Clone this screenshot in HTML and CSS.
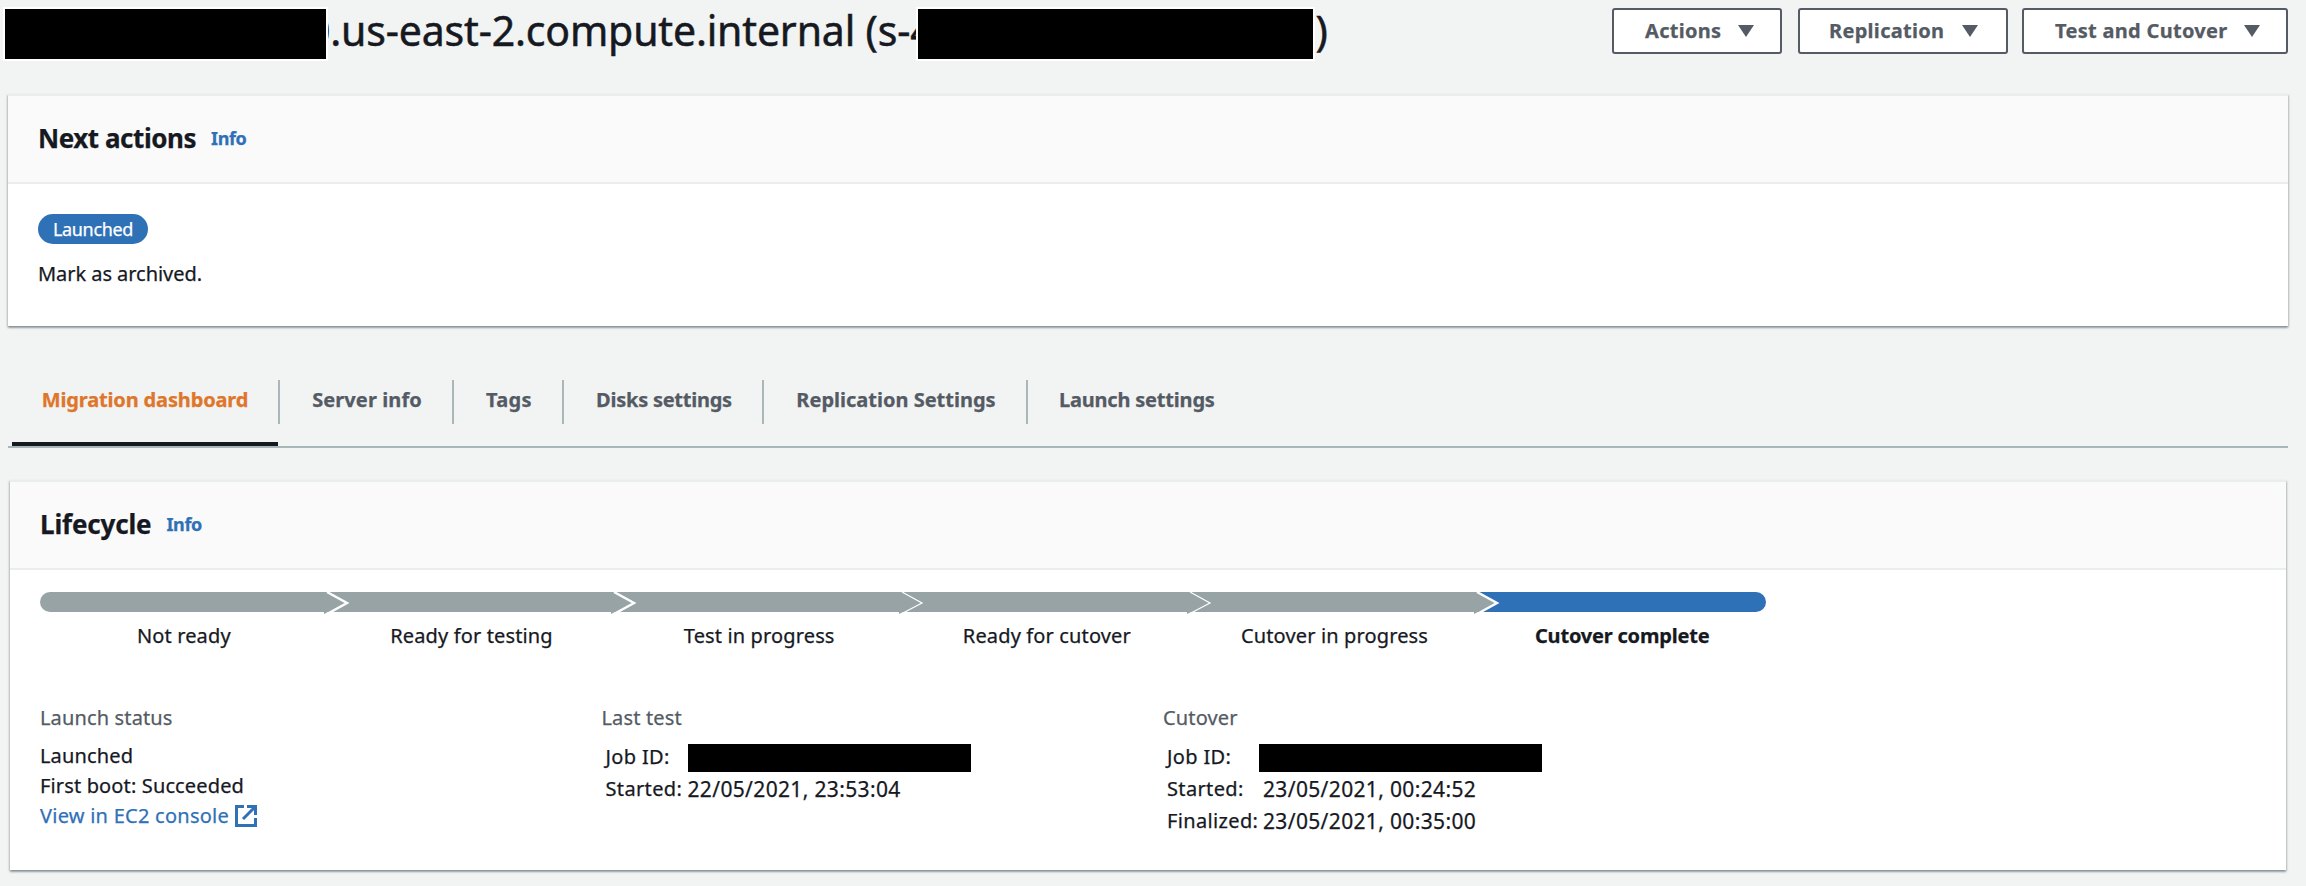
FILE: index.html
```
<!DOCTYPE html>
<html lang="en">
<head>
<meta charset="utf-8">
<title>Source server details</title>
<link rel="stylesheet" href="styles.css">
</head>
<body>
<header class="page-header">
  <h1 class="title"><span class="redacted redacted-host"></span><span class="host">0.us-east-2.compute.internal (s-4</span><span class="redacted redacted-id"></span><span>)</span></h1>
  <div class="buttons">
    <button class="btn btn-actions">Actions<svg class="caret" viewBox="0 0 16 12"><path d="M0 0h16L8 12z"/></svg></button>
    <button class="btn btn-replication">Replication<svg class="caret" viewBox="0 0 16 12"><path d="M0 0h16L8 12z"/></svg></button>
    <button class="btn btn-cutover">Test and Cutover<svg class="caret" viewBox="0 0 16 12"><path d="M0 0h16L8 12z"/></svg></button>
  </div>
</header>

<section class="panel next-actions">
  <div class="panel-header"><h2>Next actions</h2><a class="info">Info</a></div>
  <div class="panel-body">
    <span class="badge">Launched</span>
    <p class="next-text">Mark as archived.</p>
  </div>
</section>

<nav class="tabs">
  <a class="tab active">Migration dashboard</a>
  <a class="tab tab-server">Server info</a>
  <a class="tab tab-tags">Tags</a>
  <a class="tab tab-disks">Disks settings</a>
  <a class="tab tab-replication">Replication Settings</a>
  <a class="tab tab-launch">Launch settings</a>
</nav>

<section class="panel lifecycle">
  <div class="panel-header"><h2>Lifecycle</h2><a class="info">Info</a></div>
  <div class="panel-body">
    <ol class="steps">
      <li class="step"><div class="bar"><svg class="chevron" viewBox="0 0 26 22"><path class="fill" d="M0 0H4L23 11L0 22z"/><path class="line thick" d="M3 0L23 11L3 22"/></svg></div>Not ready</li>
      <li class="step"><div class="bar"><svg class="chevron" viewBox="0 0 26 22"><path class="fill" d="M0 0H4L23 11L0 22z"/><path class="line thick" d="M3 0L23 11L3 22"/></svg></div>Ready for testing</li>
      <li class="step"><div class="bar"><svg class="chevron" viewBox="0 0 26 22"><path class="fill" d="M0 0H4L23 11L0 22z"/><path class="line" d="M3 0L23 11L2 22"/></svg></div>Test in progress</li>
      <li class="step"><div class="bar"><svg class="chevron" viewBox="0 0 26 22"><path class="fill" d="M0 0H4L23 11L0 22z"/><path class="line" d="M3 0L23 11L2 22"/></svg></div>Ready for cutover</li>
      <li class="step"><div class="bar"><svg class="chevron" viewBox="0 0 26 22"><path class="fill" d="M0 0H4L23 11L0 22z"/><path class="line thick" d="M3 0L23 11L3 22"/></svg></div>Cutover in progress</li>
      <li class="step current"><div class="bar"></div>Cutover complete</li>
    </ol>
    <div class="columns">
      <div class="column">
        <div class="label">Launch status</div>
        <div>Launched</div>
        <div>First boot: Succeeded</div>
        <a class="link">View in EC2 console<svg class="external" viewBox="0 0 22 22"><path d="M9 1.500H1.500V20.500H20.500V13M12 1.500H20.500V10M20 2L8 14"/></svg></a>
      </div>
      <div class="column">
        <div class="label">Last test</div>
        <dl class="details">
          <dt>Job ID:</dt><dd class="job"></dd>
          <dt>Started:</dt><dd class="date">22/05/2021, 23:53:04</dd>
        </dl>
      </div>
      <div class="column">
        <div class="label">Cutover</div>
        <dl class="details details-cutover">
          <dt>Job ID:</dt><dd class="job"></dd>
          <dt>Started:</dt><dd class="date">23/05/2021, 00:24:52</dd>
          <dt>Finalized:</dt><dd class="date">23/05/2021, 00:35:00</dd>
        </dl>
      </div>
    </div>
  </div>
</section>
</body>
</html>
```
FILE: styles.css
```
* { box-sizing: border-box; }
body { margin: 0; width: 2306px; height: 886px; overflow: hidden; background: #f2f3f3; color: #16191f; font: 20px/30px "Noto Sans", sans-serif; -webkit-text-stroke: .25px; }
h1, h2, p, ol, dl, dd { margin: 0; padding: 0; }

.page-header { display: flex; justify-content: space-between; height: 94px; padding: 7px 18px 0 3px; }
.title { display: flex; font-size: 41px; line-height: 47px; font-weight: 400; letter-spacing: -.17px; white-space: nowrap; -webkit-text-stroke: .5px; }
.redacted { position: relative; z-index: 1; height: 54px; background: #000; border: 2px solid #fff; }
.redacted-host { width: 325px; }
.redacted-id { width: 399px; margin-left: -17px; }
.host { margin-left: -21px; }
.buttons { display: flex; padding-top: 1px; }
.btn { display: flex; align-items: center; justify-content: space-between; height: 46px; padding: 0 26px 0 31px; border: 2px solid #545b64; border-radius: 3px; background: #fff; color: #545b64; font: 700 20px/30px "Noto Sans", sans-serif; letter-spacing: .3px; white-space: nowrap; }
.btn-actions { width: 170px; margin-right: 16px; }
.btn-replication { width: 210px; margin-right: 14px; padding: 0 28px 0 29px; }
.btn-cutover { width: 266px; padding-left: 31px; }
.caret { width: 16px; height: 12px; fill: #545b64; }

.panel { background: #fff; border-top: 2px solid #eaeded; box-shadow: 0 2px 2px 0 rgba(0,28,36,.3), 1px 1px 2px 0 rgba(0,28,36,.15), -1px 1px 2px 0 rgba(0,28,36,.15); }
.panel-header { display: flex; align-items: center; gap: 15px; height: 88px; padding: 0 30px 2px; background: #fafafa; border-bottom: 2px solid #eaeded; }
h2 { font-size: 26px; line-height: 33px; font-weight: 700; letter-spacing: -.45px; }
.lifecycle h2 { letter-spacing: -.15px; }
.info { color: #2f71b7; font-size: 18px; font-weight: 700; letter-spacing: -.4px; }
.next-actions { margin: 0 18px 0 8px; height: 232px; }
.next-actions .panel-body { padding: 30px; }
.badge { display: flex; align-items: center; justify-content: center; width: 110px; height: 30px; border-radius: 15px; background: #2f71b7; color: #fff; font-size: 18px; letter-spacing: -.35px; }
.next-text { margin-top: 15px; letter-spacing: -.05px; }

.tabs { display: flex; height: 68px; margin: 54px 18px 32px 8px; border-bottom: 2px solid #aab7b8; }
.tab { height: 44px; padding: 5px 0 0 2px; border-right: 2px solid #aab7b8; color: #545b64; font-weight: 700; text-align: center; white-space: nowrap; }
.active { position: relative; width: 268px; margin-left: 4px; padding-left: 0; color: #de762b; letter-spacing: -.15px; }
.active::after { content: ""; position: absolute; left: 0; right: 0; top: 62px; height: 4px; background: #16191f; }
.tab-server { width: 174px; letter-spacing: .1px; }
.tab-tags { width: 110px; letter-spacing: .3px; }
.tab-disks { width: 200px; letter-spacing: -.25px; }
.tab-replication { width: 264px; }
.tab-launch { border: 0; padding-left: 31px; letter-spacing: -.2px; }

.lifecycle { margin: 0 20px 0 10px; height: 390px; }
.lifecycle .panel-body { padding: 22px 30px 0; letter-spacing: .14px; }
.steps { display: flex; width: 1726px; list-style: none; }
.step { flex: 1; text-align: center; }
.bar { display: flex; justify-content: flex-end; height: 20px; margin-bottom: 9px; background: #97a3a4; }
.step:first-child .bar { border-radius: 10px 0 0 10px; }
.current { font-weight: 700; letter-spacing: -.2px; }
.current .bar { background: #2f71b7; border-radius: 0 10px 10px 0; }
.chevron { position: relative; z-index: 1; flex: none; width: 26px; height: 22px; margin-right: -22px; }
.fill { fill: #97a3a4; }
.line { fill: none; stroke: #fff; stroke-width: 1.2; }
.thick { stroke-width: 2.4; }
.columns { display: flex; margin-top: 52px; }
.column { width: 561.500px; }
.label { margin-bottom: 8px; color: #545b64; }
.link { display: flex; align-items: center; gap: 6px; color: #2f71b7; letter-spacing: .25px; }
.external { width: 22px; height: 22px; fill: none; stroke: #2f71b7; stroke-width: 3; }
.details { display: grid; grid-template-columns: 82px 290px; grid-auto-rows: 32px; padding: 0 0 0 4px; line-height: 32px; letter-spacing: .35px; white-space: nowrap; }
.details-cutover { grid-template-columns: 96px 290px; }
.date { font-size: 21px; }
.job { width: 283px; height: 28px; margin: 3px 0 0; background: #000; }
.details-cutover .job { margin-left: -4px; }
```
